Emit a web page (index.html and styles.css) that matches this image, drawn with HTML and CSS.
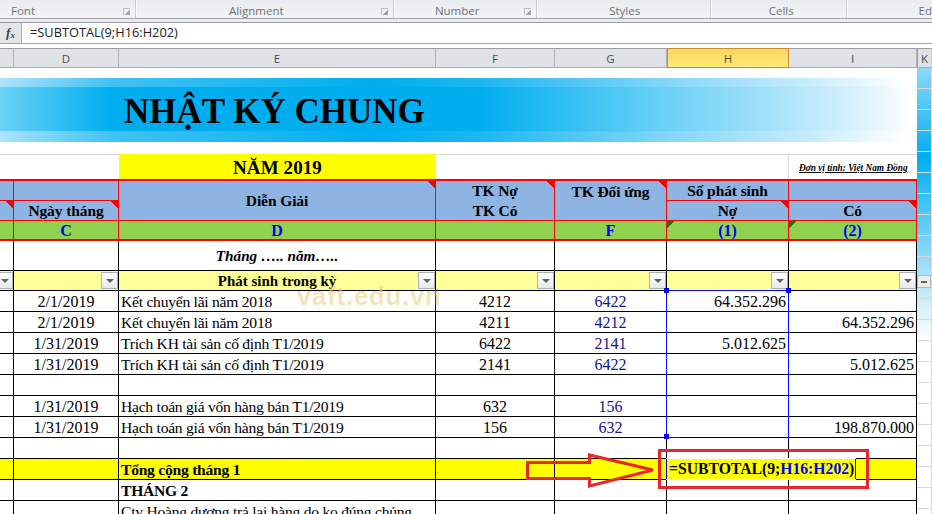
FILE: index.html
```html
<!DOCTYPE html>
<html lang="vi">
<head>
<meta charset="utf-8">
<title>Nhật ký chung</title>
<link rel="stylesheet" href="styles.css">
</head>
<body>
<div class="ribbon">
  <div class="group g1"><span class="glabel">Font</span><i class="launcher"></i></div>
  <div class="group g2"><span class="glabel">Alignment</span><i class="launcher"></i></div>
  <div class="group g3"><span class="glabel">Number</span><i class="launcher"></i></div>
  <div class="group g4"><span class="glabel">Styles</span></div>
  <div class="group g5"><span class="glabel">Cells</span></div>
  <div class="group g6"><span class="glabel">Ed</span></div>
</div>
<div class="formula">
  <div class="fx"><i>f</i><i class="x">x</i></div>
  <div class="ftext">=SUBTOTAL(9;H16:H202)</div>
</div>
<div class="colheads">
  <div class="ch"></div><div class="ch">D</div><div class="ch">E</div><div class="ch">F</div><div class="ch">G</div><div class="ch on">H</div><div class="ch">I</div><div class="ch kh">K</div>
</div>
<div class="sheet">
  <div class="main">
    <div class="banner">
      <div class="band"><h1>NHẬT KÝ CHUNG</h1></div>
    </div>
    <table>
      <colgroup><col class="c0"><col class="c1"><col class="c2"><col class="c3"><col class="c4"><col class="c5"><col class="c6"></colgroup>
      <tr class="r-year">
        <td></td><td></td><td class="year">NĂM 2019</td><td></td><td></td><td class="gridr"></td><td class="unit">Đơn vị tính: Việt Nam Đồng</td>
      </tr>
      <tr class="r-h1 hd">
        <td></td><td></td>
        <td rowspan="2" class="tri">Diễn Giải</td>
        <td rowspan="2" class="tri two">TK Nợ<br>TK Có</td>
        <td rowspan="2" class="tri top">TK Đối ứng</td>
        <td>Số phát sinh</td><td></td>
      </tr>
      <tr class="r-h2 hd">
        <td class="tri"></td><td class="tri">Ngày tháng</td>
        <td class="tri">Nợ</td><td class="tri">Có</td>
      </tr>
      <tr class="r-h3 gr">
        <td></td><td>C</td><td>D</td><td></td><td>F</td><td class="gtri">(1)</td><td class="gtri">(2)</td>
      </tr>
      <tr class="r-month">
        <td></td><td></td><td class="month">Tháng ….. năm…..</td><td></td><td></td><td></td><td></td>
      </tr>
      <tr class="r-filter">
        <td><div class="fc"><span class="fb"></span></div></td>
        <td><div class="fc"><span class="fb"></span></div></td>
        <td><div class="fc"><b class="ftitle">Phát sinh trong kỳ</b><span class="fb"></span></div></td>
        <td><div class="fc"><span class="fb"></span></div></td>
        <td><div class="fc"><span class="fb"></span></div></td>
        <td><div class="fc"><span class="fb"></span></div></td>
        <td><div class="fc"><span class="fb"></span></div></td>
      </tr>
      <tr class="row"><td></td><td class="ctr">2/1/2019</td><td class="txt">Kết chuyển lãi năm 2018</td><td class="ctr">4212</td><td class="ctr nv">6422</td><td class="num">64.352.296</td><td></td></tr>
      <tr class="row"><td></td><td class="ctr">2/1/2019</td><td class="txt">Kết chuyển lãi năm 2018</td><td class="ctr">4211</td><td class="ctr nv">4212</td><td></td><td class="num">64.352.296</td></tr>
      <tr class="row"><td></td><td class="ctr">1/31/2019</td><td class="txt">Trích KH tài sản cố định T1/2019</td><td class="ctr">6422</td><td class="ctr nv">2141</td><td class="num">5.012.625</td><td></td></tr>
      <tr class="row"><td></td><td class="ctr">1/31/2019</td><td class="txt">Trích KH tài sản cố định T1/2019</td><td class="ctr">2141</td><td class="ctr nv">6422</td><td></td><td class="num">5.012.625</td></tr>
      <tr class="row"><td></td><td></td><td></td><td></td><td></td><td></td><td></td></tr>
      <tr class="row"><td></td><td class="ctr">1/31/2019</td><td class="txt">Hạch toán giá vốn hàng bán T1/2019</td><td class="ctr">632</td><td class="ctr nv">156</td><td></td><td></td></tr>
      <tr class="row"><td></td><td class="ctr">1/31/2019</td><td class="txt">Hạch toán giá vốn hàng bán T1/2019</td><td class="ctr">156</td><td class="ctr nv">632</td><td></td><td class="num">198.870.000</td></tr>
      <tr class="row"><td></td><td></td><td></td><td></td><td></td><td></td><td></td></tr>
      <tr class="row total"><td></td><td></td><td class="txt bold">Tổng cộng tháng 1</td><td></td><td></td><td></td><td></td></tr>
      <tr class="row"><td></td><td></td><td class="txt bold">THÁNG 2</td><td></td><td></td><td></td><td></td></tr>
      <tr class="r-last"><td></td><td></td><td class="txt last">Cty Hoàng dương trả lại hàng do ko đúng chủng</td><td></td><td></td><td></td><td></td></tr>
    </table>
  </div>
  <div class="kcol"><span class="kbtn"></span></div>

  <div class="watermark">vaft.edu.vn</div>
  <div class="sel"></div>
  <i class="hd-sq sq1"></i><i class="hd-sq sq2"></i><i class="hd-sq sq3"></i>
  <div class="seltail"></div>
  <div class="edit">=SUBTOTAL(9;<span class="rng">H16:H202</span>)</div>
  <div class="redbox"></div>
  <svg class="arrow" width="140" height="40" viewBox="0 0 140 40" aria-hidden="true">
    <path d="M7.500 10.500H69.500V3L133 18L69.500 34V26.500H7.500Z" fill="none" stroke="#e8262f" stroke-width="3"/>
  </svg>
</div>
</body>
</html>
```

FILE: styles.css
```css
* { box-sizing: border-box; }
html, body { margin: 0; padding: 0; }
body { width: 932px; height: 514px; overflow: hidden; background: #fff; font-family: "Liberation Serif", serif; color: #000; }

.ribbon { display: flex; height: 19px; background: linear-gradient(#e9ebef, #f3f4f6); border-bottom: 1px solid #a3a7ac; font-family: "Open Sans", sans-serif; font-size: 11.500px; color: #6d7278; }
.group { display: flex; align-items: center; justify-content: center; position: relative; padding-top: 2px; border-right: 1px solid #fbfbfc; box-shadow: inset -1px 0 0 #c9ccd1; }
.g1 { width: 137px; justify-content: flex-start; padding-left: 11px; }
.g2 { width: 259px; padding-right: 18px; }
.g3 { width: 144px; padding-right: 18px; }
.g4 { width: 174px; }
.g5 { width: 136px; padding-left: 4px; }
.g6 { flex: 1; border-right: 0; box-shadow: none; justify-content: flex-start; padding-left: 71px; }
.launcher { position: absolute; right: 6px; top: 8px; width: 7px; height: 7px; border: 1px solid #b9bdc2; border-width: 1px 0 0 1px; background: linear-gradient(135deg, transparent 55%, #9fa3a9 55%); }

.formula { display: flex; height: 25px; padding-top: 3px; background: #e9ebee; border-bottom: 1px solid #a3a7ac; }
.fx { width: 22px; height: 21px; background: #e3e5e9; border-top: 1px solid #9a9da1; border-right: 1px solid #a9adb2; font: italic bold 13px "Liberation Serif", serif; color: #444; display: flex; align-items: center; justify-content: center; }
.fx .x { font-size: 9px; margin-top: 3px; }
.ftext { flex: 1; height: 21px; background: #fff; border-top: 1px solid #9a9da1; padding-left: 8px; font: 12.800px/19px "Open Sans", sans-serif; color: #222; white-space: nowrap; }

.colheads { display: grid; grid-template-columns: 14px 105px 317px 119px 112px 122px 128px 15px; height: 24px; padding-top: 4px; background: #fff; }
.colheads .ch { height: 20px; background: #dfe2e6; border-top: 1px solid #9b9da1; border-bottom: 1px solid #a8abaf; border-right: 1px solid #aeb1b6; font: 11.500px/19px "Open Sans", sans-serif; color: #4a4d52; text-align: center; }
.colheads .on { background: linear-gradient(#fdd560, #ffeb78); border: 1px solid #c88f2a; color: #5c4a24; }
.colheads .kh { border-left: 1px solid #9b9da1; background: #dfe2e6; border-right: 1px solid #c6c8cc; }

.sheet { position: relative; display: flex; height: 466px; overflow: hidden; }
.main { width: 917px; flex: none; }

.banner { padding-top: 10px; height: 86px; }
.band { height: 64px; padding-top: 9px; background: linear-gradient(90deg, #ade3fa 0, #42c3f3 110px, #00aeef 370px, #1cb7f1 480px, #8ad9f9 680px, #c7ecfb 810px, #fff 905px); }
.band h1 { margin: 0; height: 44px; padding: 3px 0 0 124px; font: bold 35px/44px "Liberation Serif", serif; white-space: nowrap; background: linear-gradient(90deg, #6cd1f6 0, #00aeef 110px, #00aeef 480px, #5ccdf6 640px, #9fe0fa 760px, #d4f0fc 850px, #fff 912px); }

table { table-layout: fixed; width: 917px; border-collapse: separate; border-spacing: 0; }
.c0 { width: 14px; } .c1 { width: 105px; } .c2 { width: 317px; } .c3 { width: 119px; } .c4 { width: 112px; } .c5 { width: 122px; } .c6 { width: 128px; }
td { padding: 0; border-right: 1px solid #000; border-bottom: 1px solid #000; font-size: 16px; line-height: 18px; white-space: nowrap; overflow: hidden; }

.r-year td { height: 25px; border-right: 0; border-bottom: 0; border-top: 1px solid #d9d9d9; }
.r-year .gridr { border-right: 1px solid #d9d9d9; }
.r-year .year { background: #ff0; border-top: 0; font-weight: bold; font-size: 19px; letter-spacing: .1px; text-align: center; padding-top: 2px; }
.r-year .unit { font-size: 9.300px; font-style: italic; font-weight: bold; text-decoration: underline; padding-left: 10px; padding-top: 2px; }

.hd td { background-color: #8db4e2; border-color: #f00; text-align: center; font-weight: bold; font-size: 15.500px; letter-spacing: -.1px; line-height: 17px; }
.r-h1 td { height: 22px; border-top: 2px solid #f00; }
.r-h2 td { height: 20px; }
.hd .two { line-height: 19.500px; }
.hd .tri, .gr .gtri { background-repeat: no-repeat; }
.hd .tri { background-image: linear-gradient(225deg, #f00 5px, transparent 5px); }
.hd .top { vertical-align: top; padding-top: 2px; }
.gr td { height: 20px; background-color: #92d050; border-color: #f00; border-bottom-width: 2px; color: #00f; font-weight: bold; text-align: center; line-height: 17px; }
.gr .gtri { background-image: linear-gradient(135deg, #0a7a0a 5px, transparent 5px); }

.r-month td { height: 30px; }
.month { font-weight: bold; font-style: italic; font-size: 15.200px; text-align: center; padding-top: 1px; }
.r-filter td { height: 20px; background: #ffff99; }
.fc { display: flex; height: 19px; justify-content: flex-end; padding-top: 1px; overflow: hidden; }
.ftitle { flex: 1; font-size: 15px; line-height: 18px; text-align: center; padding-left: 17px; }
.fb { flex: none; width: 17px; height: 17px; border: 1px solid #adb1b8; background: linear-gradient(#fff, #e6e8eb); display: flex; align-items: center; justify-content: center; }
.fb::after { content: ""; border: 4px solid transparent; border-top: 4px solid #5f6166; border-bottom: 0; }

.row td { height: 21px; padding-top: 1px; }
.total td { background: #ff0; }
.ctr { text-align: center; }
.nv { color: #15158a; }
.num { text-align: right; padding-right: 2px; }
.row .txt { padding-left: 2px; font-size: 15.600px; letter-spacing: -.25px; }
.row .bold { font-weight: bold; padding-left: 2px; }
.r-last td { height: 44px; vertical-align: top; }
.last { padding-top: 2px; padding-left: 2px; font-size: 15.600px; letter-spacing: -.25px; }

.kcol { flex: 1; position: relative; background-image: repeating-linear-gradient(transparent 0, transparent 20px, #d9d9d9 20px, #d9d9d9 21px), linear-gradient(#8bd9f8 0, #00aeef 89px, #a6e2fa 205px, #fff 272px); border-right: 1px solid #dcdcdc; }
.kbtn { position: absolute; left: 0; top: 207px; width: 14px; height: 13px; border: 1px solid #b4b7bc; background: #eceef0; display: flex; align-items: center; justify-content: center; }
.kbtn::after { content: ""; width: 6px; height: 0; border-top: 2px solid #666; }

.watermark { position: absolute; left: 297px; top: 212px; font: bold 25.500px/32px "Liberation Sans", sans-serif; color: rgba(232, 205, 125, .55); white-space: nowrap; letter-spacing: .9px; }
.sel { position: absolute; left: 666px; top: 222px; width: 123px; height: 150px; border: solid #00f; border-width: 1px 1px 0 1px; }
.hd-sq { position: absolute; width: 5px; height: 5px; background: #00f; }
.sq1 { left: 664px; top: 220px; }
.sq2 { left: 786px; top: 220px; }
.sq3 { left: 664px; top: 366px; }
.seltail { position: absolute; left: 667px; top: 369px; width: 13px; height: 1px; background: #00f; }
.edit { position: absolute; left: 666px; top: 390px; width: 190px; height: 22px; background: #ff0; border: solid #fff; border-width: 1px 0; box-shadow: inset 1px 0 0 #00f, inset -1px 0 0 #00f; padding-left: 3px; font: bold 15.700px/20px "Liberation Serif", serif; white-space: nowrap; }
.rng { color: #00f; }
.redbox { position: absolute; left: 658px; top: 381px; width: 211px; height: 40px; border: 3px solid #e8262f; }
.arrow { position: absolute; left: 520px; top: 384px; }
```
